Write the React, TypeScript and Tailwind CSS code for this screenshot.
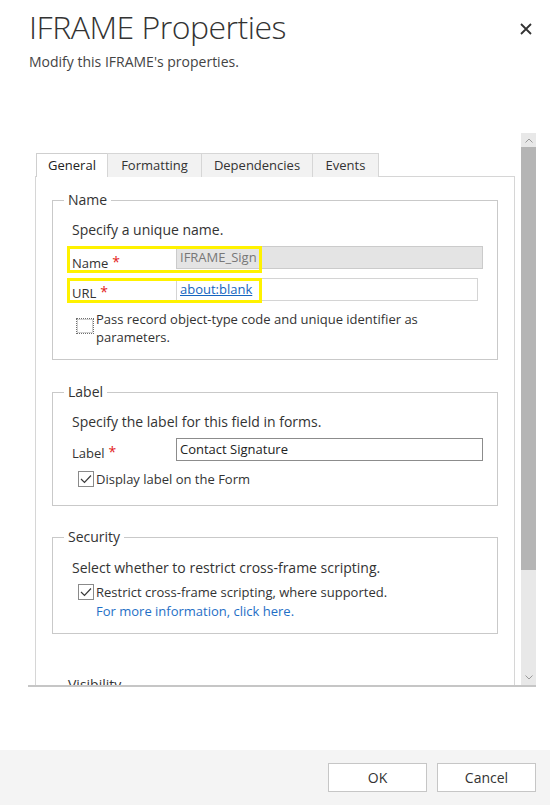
import type { ReactNode } from "react";

const TABS = [
  { label: "General", width: "w-[72px]", active: true },
  { label: "Formatting", width: "w-[95px]", active: false },
  { label: "Dependencies", width: "w-[112px]", active: false },
  { label: "Events", width: "w-[67px]", active: false },
];

function Required() {
  return <span className="ml-[4px] align-top text-[14px] leading-none text-[#e31b1b]">*</span>;
}

function CheckBox({ checked, focused }: { checked?: boolean; focused?: boolean }) {
  return (
    <span
      className={`flex shrink-0 items-center justify-center bg-white ${
        focused
          ? "h-[16px] w-[18px] border border-dotted border-[#6f6f6f] outline outline-1 outline-[#d0d0d0] -outline-offset-2"
          : "h-[16px] w-[16px] border border-[#8a8a8a]"
      }`}
    >
      {checked && (
        <svg width="12" height="10" viewBox="0 0 12 10" fill="none">
          <polyline points="1,5 4.5,8.5 11,1.5" stroke="#3a3a3a" strokeWidth="1.2" />
        </svg>
      )}
    </span>
  );
}

function Group({ title, className, children }: { title: string; className: string; children?: ReactNode }) {
  return (
    <fieldset className={`border border-[#c9c9c9] ${className}`}>
      <legend className="ml-[11px] px-[4px] text-[14px] leading-[20px] text-[#333]">{title}</legend>
      {children}
    </fieldset>
  );
}

export default function App() {
  return (
    <div className="flex h-[805px] w-[550px] flex-col overflow-hidden bg-white font-['Open_Sans',sans-serif] text-[#333]">
      {/* Header */}
      <header className="flex justify-between pl-[29px] pr-[17px] pt-[7px]">
        <div>
          <h1 className="text-[32px] font-light leading-[40px] tracking-[-0.5px] text-[#333]">IFRAME Properties</h1>
          <p className="mt-[5px] text-[14px] leading-[20px] text-[#444]">Modify this IFRAME's properties.</p>
        </div>
        <button className="mt-[15px] flex h-[14px] w-[14px] items-center justify-center">
          <svg width="12" height="12" viewBox="0 0 12 12">
            <path d="M1 1 L11 11 M11 1 L1 11" stroke="#333" strokeWidth="1.8" />
          </svg>
        </button>
      </header>

      {/* Scroll area */}
      <div className="ml-[28px] mt-[61px] flex h-[554px] w-[508px] border-b-2 border-[#c6c6c6]">
        <div className="flex-1 overflow-hidden pl-[7px] pr-[6px] pt-[20px]">
          <div className="-mb-px flex pl-[1px]">
            {TABS.map((t) => (
              <div
                key={t.label}
                className={`relative flex h-[24px] ${t.width} items-center justify-center border-l border-r border-t text-[13px] ${
                  t.active ? "border-[#cfcfcf] bg-white text-[#222]" : "-ml-px border-[#d6d6d6] bg-[#f2f2f2] text-[#333]"
                }`}
              >
                {t.label}
              </div>
            ))}
          </div>

          <div className="h-[600px] border border-[#d6d6d6] px-[16px]">
            {/* Name */}
            <Group title="Name" className="mt-[13px]">
              <div className="pb-[13px] pl-[19px] pr-[13px]">
                <p className="mt-[10px] text-[14px] leading-[20px]">Specify a unique name.</p>
                <div className="relative mt-[6px] flex h-[24px] items-start">
                  <div className="w-[104px] pt-[9px] text-[13px] leading-[16px]">
                    Name<Required />
                  </div>
                  <div className="flex h-[23px] w-[307px] items-center border border-[#cbcbcb] bg-[#e4e4e4] pl-[3px] text-[13px] text-[#777]">
                    IFRAME_Sign
                  </div>
                  <div className="pointer-events-none absolute left-[-5px] top-0 h-[27px] w-[195px] border-[3px] border-[#fff200]" />
                </div>
                <div className="relative mt-[8px] flex h-[24px] items-start">
                  <div className="w-[104px] pt-[7px] text-[13px] leading-[16px]">
                    URL<Required />
                  </div>
                  <div className="flex h-[23px] w-[302px] items-center border border-[#d4d4d4] bg-white pl-[3px] text-[13px]">
                    <span className="text-[#1565c0] underline">about:blank</span>
                  </div>
                  <div className="pointer-events-none absolute left-[-5px] top-0 h-[25px] w-[195px] border-[3px] border-[#fff200]" />
                </div>
                <div className="mt-[8px] flex items-start">
                  <div className="ml-[4px] mt-[8px]">
                    <CheckBox focused />
                  </div>
                  <p className="ml-[2px] w-[360px] text-[13px] leading-[18px]">
                    Pass record object-type code and unique identifier as parameters.
                  </p>
                </div>
              </div>
            </Group>

            {/* Label */}
            <Group title="Label" className="mt-[22px]">
              <div className="pb-[17px] pl-[19px] pr-[13px]">
                <p className="mt-[10px] text-[14px] leading-[20px]">Specify the label for this field in forms.</p>
                <div className="mt-[6px] flex h-[23px] items-start">
                  <div className="w-[104px] pt-[7px] text-[13px] leading-[16px]">
                    Label<Required />
                  </div>
                  <div className="flex h-[23px] w-[307px] items-center border border-[#8c8c8c] bg-white pl-[3px] text-[13px] text-[#222]">
                    Contact Signature
                  </div>
                </div>
                <div className="mt-[9px] flex items-start">
                  <div className="ml-[6px] mt-[1px]">
                    <CheckBox checked />
                  </div>
                  <p className="ml-[2px] text-[13px] leading-[18px]">Display label on the Form</p>
                </div>
              </div>
            </Group>

            {/* Security */}
            <Group title="Security" className="mt-[21px]">
              <div className="pb-[13px] pl-[19px] pr-[13px]">
                <p className="mt-[11px] text-[14px] leading-[20px]">Select whether to restrict cross-frame scripting.</p>
                <div className="mt-[5px] flex items-start">
                  <div className="ml-[6px] mt-[1px]">
                    <CheckBox checked />
                  </div>
                  <p className="ml-[2px] text-[13px] leading-[18px]">Restrict cross-frame scripting, where supported.</p>
                </div>
                <p className="ml-[24px] mt-[1px] text-[13px] leading-[18px] text-[#1f6fc6]">For more information, click here.</p>
              </div>
            </Group>

            {/* Visibility (cut off by the scroll area, as in the dialog) */}
            <Group title="Visibility" className="mt-[41px] h-[80px]" />
          </div>
        </div>

        {/* Scrollbar */}
        <div className="flex w-[15px] flex-col bg-[#e8e8e8]">
          <div className="flex h-[14px] items-center justify-center">
            <svg width="8" height="5" viewBox="0 0 8 5" fill="none">
              <polyline points="0.5,4.5 4,1 7.5,4.5" stroke="#9a9a9a" strokeWidth="1" />
            </svg>
          </div>
          <div className="h-[423px] bg-[#b5b5b5]" />
          <div className="flex-1" />
          <div className="flex h-[16px] items-center justify-center">
            <svg width="8" height="5" viewBox="0 0 8 5" fill="none">
              <polyline points="0.5,0.5 4,4 7.5,0.5" stroke="#9a9a9a" strokeWidth="1" />
            </svg>
          </div>
        </div>
      </div>

      {/* Footer */}
      <footer className="mt-auto flex h-[55px] items-start justify-end gap-[10px] bg-[#f4f4f4] pr-[14px] pt-[13px]">
        <button className="h-[29px] w-[99px] border border-[#c6c6c6] bg-white text-[14px] text-[#333]">OK</button>
        <button className="h-[29px] w-[99px] border border-[#c6c6c6] bg-white text-[14px] text-[#333]">Cancel</button>
      </footer>
    </div>
  );
}
